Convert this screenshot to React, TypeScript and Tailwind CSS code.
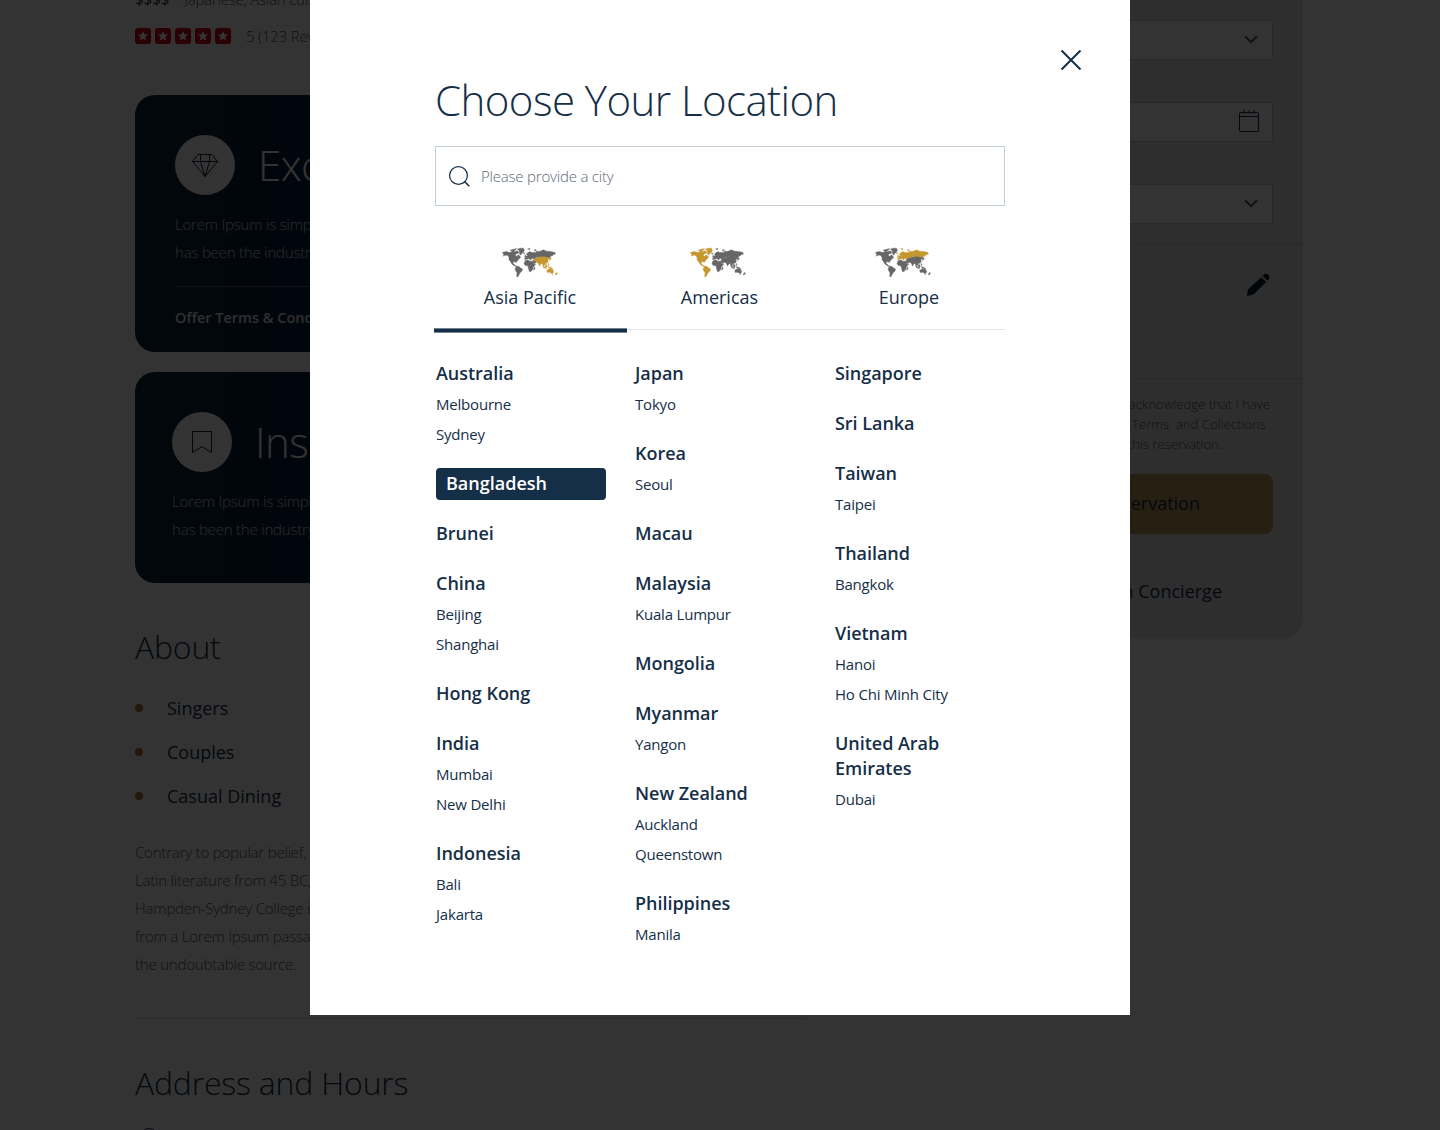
import React from "react";

type Country = { name: string; cities?: string[]; active?: boolean };

const columns: Country[][] = [
  [
    { name: "Australia", cities: ["Melbourne", "Sydney"] },
    { name: "Bangladesh", active: true },
    { name: "Brunei" },
    { name: "China", cities: ["Beijing", "Shanghai"] },
    { name: "Hong Kong" },
    { name: "India", cities: ["Mumbai", "New Delhi"] },
    { name: "Indonesia", cities: ["Bali", "Jakarta"] },
  ],
  [
    { name: "Japan", cities: ["Tokyo"] },
    { name: "Korea", cities: ["Seoul"] },
    { name: "Macau" },
    { name: "Malaysia", cities: ["Kuala Lumpur"] },
    { name: "Mongolia" },
    { name: "Myanmar", cities: ["Yangon"] },
    { name: "New Zealand", cities: ["Auckland", "Queenstown"] },
    { name: "Philippines", cities: ["Manila"] },
  ],
  [
    { name: "Singapore" },
    { name: "Sri Lanka" },
    { name: "Taiwan", cities: ["Taipei"] },
    { name: "Thailand", cities: ["Bangkok"] },
    { name: "Vietnam", cities: ["Hanoi", "Ho Chi Minh City"] },
    { name: "United Arab Emirates", cities: ["Dubai"] },
  ],
];

const GREY = "#666666";
const GOLD = "#c4982f";

function WorldMap({ region }: { region: "asia" | "americas" | "europe" }) {
  const am = region === "americas" ? GOLD : GREY;
  const eu = region === "europe" ? GOLD : GREY;
  const as = region === "asia" ? GOLD : GREY;
  return (
    <svg viewBox="36 36 168 92" className="h-[31px] w-[56px]" strokeWidth="1.200" strokeLinejoin="round">
      <g fill={am} stroke={am}>
        <path d="M37 52 L48 49 L60 52 L70 47 L74 50 L80 47 L86 50 L84 55 L78 56 L76 60 L81 64 L84 59 L89 62 L92 67 L87 71 L84 75 L80 79 L79 83 L76 80 L70 80 L69 85 L73 87 L74 90 L80 93 L77 94 L70 90 L64 84 L61 78 L57 74 L57 66 L52 60 L46 60 L39 63 L42 59Z" />
        <path d="M60 45 L68 43 L80 40 L76 45 L68 48Z" />
        <path d="M82 42 L90 39 L100 39 L103 44 L101 51 L95 55 L92 60 L88 55 L88 47Z" />
        <path d="M79 93 L86 93 L91 98 L98 102 L95 109 L90 113 L87 119 L84 125 L80 124 L81 113 L75 103Z" />
      </g>
      <g fill={GREY} stroke={GREY}>
        <path d="M105 77 L114 74 L119 78 L128 78 L132 87 L137 87 L130 96 L128 103 L122 110 L118 109 L115 98 L114 92 L106 91 L102 86Z" />
        <path d="M132 98 L135 96 L134 103 L131 105Z" />
        <path d="M128 76 L134 75 L140 79 L135 85 L131 84Z" />
      </g>
      <g fill={as} stroke={as}>
        <path d="M129 72 L137 68 L145 66 L152 64 L162 62 L174 65 L180 65 L178 71 L173 73 L175 80 L170 84 L165 85 L167 91 L162 88 L163 96 L158 89 L156 84 L151 88 L149 93 L145 84 L138 80 L134 76Z" />
        <path d="M181 67 L184 70 L179 76 L178 73Z M158 91 L165 98 L170 99 L168 101 L160 97Z M166 91 L171 88 L171 96 L167 97Z M174 94 L185 98 L188 102 L178 99Z M174 84 L177 88 L175 91Z" />
        <path d="M170 106 L175 102 L180 101 L183 103 L186 100 L191 109 L189 114 L184 115 L180 111 L172 112Z M199 112 L203 114 L197 120 L196 118Z M186 117 L188 117 L187 119Z" />
      </g>
      <g fill={eu} stroke={eu}>
        <path d="M104 73 L104 69 L108 68 L107 65 L112 62 L112 60 L109 58 L113 53 L120 49 L125 52 L131 52 L138 52 L141 46 L145 50 L154 47 L160 44 L170 48 L182 49 L195 52 L196 57 L190 58 L186 63 L182 61 L181 66 L174 66 L162 63 L150 65 L139 66 L134 70 L125 70 L122 75 L117 70 L109 72Z" />
        <path d="M105 60 L108 62 L107 67 L104 66Z M101 54 L105 54 L104 57 L101 56Z M113 41 L120 40 L118 44Z M132 46 L138 42 L136 48Z" />
      </g>
    </svg>
  );
}

function StarBox() {
  return (
    <svg viewBox="0 0 16 16" className="size-4">
      <rect width="16" height="16" rx="3" fill="#d3001b" />
      <path fill="#fff" d="M8 3l1.5 3.2 3.5.4-2.6 2.4.7 3.5L8 10.8l-3.1 1.7.7-3.5L3 6.6l3.5-.4z" />
    </svg>
  );
}

function SelectBox({ icon }: { icon: "chevron" | "calendar" }) {
  return (
    <div className="mb-[42px] flex h-10 items-center justify-end border border-[#c8ced6] bg-white pr-[13px]">
      {icon === "chevron" ? (
        <svg viewBox="0 0 14 9" className="mb-px mr-px h-[9px] w-[14px]" fill="none" stroke="#4b5560" strokeWidth="2">
          <path d="M1 1.2l6 6 6-6" />
        </svg>
      ) : (
        <svg viewBox="0 0 20 22" className="mb-[2px] h-[22px] w-5" fill="none" stroke="#0a2540">
          <rect x=".5" y="2.5" width="19" height="19" rx="1" />
          <path d="M0 6.5h20" />
          <path d="M5 0v4M10 0v4M15 0v4" stroke="#6b7480" strokeWidth="1.6" />
        </svg>
      )}
    </div>
  );
}

function Page() {
  return (
    <div className="flex h-full items-start justify-between bg-white pl-[135px] text-[#4c5666]">
      <div className="w-[670px] whitespace-nowrap">
        <div className="-mt-[13px] flex h-6 items-center gap-[15px] text-[15px] font-light tracking-[-0.2px]">
          <span className="font-normal tracking-normal text-[#162f48]">$$$$</span>
          <span>Japanese, Asian cuisine</span>
        </div>
        <div className="mt-[17px] flex h-4 items-center">
          <div className="flex gap-1">
            <StarBox /><StarBox /><StarBox /><StarBox /><StarBox />
          </div>
          <span className="ml-[15px] text-[15px] font-light tracking-[-0.2px]">5 (123 Reviews)</span>
        </div>

        <section className="mt-[51px] h-[257px] overflow-hidden rounded-[20px] bg-linear-to-r from-[#0a2633] to-[#041d46] to-30% pl-10 pt-10 text-white">
          <div className="flex h-[60px] items-center">
            <div className="flex size-[60px] items-center justify-center rounded-full bg-white">
              <svg viewBox="0 0 26 23" className="h-[23px] w-[26px]" fill="none" stroke="#0a2540" strokeWidth="1" strokeLinejoin="round">
                <path d="M6 .5h14l5.5 7L13 22.500.5 7.500zM.5 7.500h25M8.500.5v7L13 22.500l4.500-15v-7" />
              </svg>
            </div>
            <h2 className="mb-[2px] ml-[23px] text-[42px] font-light tracking-[-0.55px]">Exclusive</h2>
          </div>
          <p className="mt-[15px] text-[15px] font-light leading-7 tracking-[-0.2px] text-white/80">Lorem Ipsum is simply dummy text<br />has been the industry's standard</p>
          <div className="mr-10 mt-5 border-t border-white/30" />
          <div className="mt-[19px] text-[14.500px] font-semibold leading-6 text-white/90">Offer Terms &amp; Conditions</div>
        </section>

        <section className="mt-5 h-[211px] overflow-hidden rounded-[20px] bg-linear-to-r from-[#0a2633] to-[#041d46] to-30% pl-[37px] pt-10 text-white">
          <div className="flex h-[60px] items-center">
            <div className="flex size-[60px] items-center justify-center rounded-full bg-white">
              <svg viewBox="0 0 20 22" className="h-[22px] w-5" fill="none" stroke="#0a2540">
                <path d="M.5.5h19v21L10 15.500.5 21.500z" />
              </svg>
            </div>
            <h2 className="mb-[2px] ml-[23px] text-[42px] font-light tracking-[-0.55px]">Insider</h2>
          </div>
          <p className="mt-[15px] text-[15px] font-light leading-7 tracking-[-0.2px] text-white/80">Lorem Ipsum is simply dummy text<br />has been the industry's standard</p>
        </section>

        <h2 className="mt-[41px] text-[32px] font-light leading-[46px] tracking-[-0.2px] text-[#162f48]">About</h2>
        <ul className="mt-[16px] text-[18px] leading-[44px] text-[#162f48]">
          {["Singers", "Couples", "Casual Dining"].map((t) => (
            <li key={t} className="flex items-center gap-6">
              <span className="size-2 rounded-full bg-[#b5773c]" />
              {t}
            </li>
          ))}
        </ul>
        <p className="mt-5 text-[15px] font-light leading-7 tracking-[-0.2px]">
          Contrary to popular belief, Lorem Ipsum<br />
          Latin literature from 45 BC, making it over<br />
          Hampden-Sydney College in Virginia<br />
          from a Lorem Ipsum passage, and going<br />
          the undoubtable source.
        </p>
        <div className="mt-10 border-t border-[#c8ced6]" />
        <h2 className="mt-[41px] text-[32px] font-light leading-[46px] tracking-[-0.2px] text-[#162f48]">Address and Hours</h2>
        <div className="ml-1 mt-[22px] size-5 rounded-full border border-[#162f48]" />
      </div>

      <aside className="mr-[137px] h-[638px] w-[330px] overflow-hidden whitespace-nowrap rounded-br-[20px] bg-[#e3e6ec]">
        <div className="px-[30px] pt-5">
          <SelectBox icon="chevron" />
          <SelectBox icon="calendar" />
          <SelectBox icon="chevron" />
        </div>
        <div className="-mt-[22px] flex h-[135px] justify-end border-y border-[#c8ced6] pr-[33px] pt-7">
          <svg viewBox="0 0 24 24" className="size-6" fill="#061a2c">
            <path d="M15.300 4.200l4.800 4.800L7.500 21.600 1 23l1-6.500z M16.600 2.900l1-1a3.400 3.400 0 0 1 4.800 4.800l-1 1z" />
          </svg>
        </div>
        <p className="pr-[33px] pt-[15px] text-right text-[13px] font-light leading-5 tracking-[0.06px]">
          I acknowledge that i have<br />
          <span className="mr-1">the Terms&nbsp; and Collections</span><br />
          <span className="mr-[48px]">making this reservation.</span>
        </p>
        <div className="mx-[30px] mt-5 flex h-[60px] items-center justify-end rounded-lg bg-[#c39b5c] pb-[2px] pr-[73px] text-[18px] text-[#162f48]">Reservation</div>
        <div className="mt-[43px] pr-[81px] text-right text-[18px] leading-7 text-[#162f48]">with Concierge</div>
      </aside>
    </div>
  );
}

function Dialog() {
  return (
    <div className="h-[1015px] w-[820px] bg-white px-[125px] text-[#162f48]">
      <div className="-mr-[77px] flex justify-end pt-[49px]">
        <svg viewBox="0 0 22 22" className="size-[22px]" stroke="#162f48" strokeWidth="2">
          <path d="M1.500 1.500l19 19M20.500 1.500l-19 19" />
        </svg>
      </div>
      <h1 className="-mt-px h-[60px] text-[42px] font-light leading-[60px] tracking-[-0.55px]">Choose Your Location</h1>
      <label className="mt-4 flex h-[60px] items-center border border-[#c5cfd6] pl-[13px]">
        <svg viewBox="0 0 21 21" className="size-[21px]" fill="none" stroke="#162f48" strokeWidth="1.200">
          <circle cx="9.500" cy="9.500" r="8.900" />
          <path d="M15.500 15.500l4.800 4.800" strokeWidth="1.600" />
        </svg>
        <span className="ml-[11px] text-[15px] font-light tracking-[-0.2px] text-[#5d6975]">Please provide a city</span>
      </label>
      <div className="relative mt-[41px] flex h-[83px] border-b border-[#e4e7ea] text-[18px]">
        <div className="flex w-[190px] flex-col items-center">
          <WorldMap region="asia" />
          <span className="mt-[5px] leading-7">Asia Pacific</span>
        </div>
        <div className="flex w-[189px] flex-col items-center">
          <div className="-ml-[3px]"><WorldMap region="americas" /></div>
          <span className="mt-[5px] leading-7">Americas</span>
        </div>
        <div className="flex w-[190px] flex-col items-center">
          <div className="-ml-[13px]"><WorldMap region="europe" /></div>
          <span className="mt-[5px] leading-7">Europe</span>
        </div>
        <div className="absolute -bottom-[3.500px] -left-px h-[5px] w-[193px] border-y border-[#162f48]/60 bg-[#162f48] bg-clip-padding" />
      </div>
      <div className="ml-px mt-[31px] grid grid-cols-[199px_200px_170px]">
        {columns.map((col, i) => (
          <div key={i} className="flex w-[170px] flex-col gap-[25px]">
            {col.map((c) => (
              <div key={c.name}>
                <h3
                  className={
                    c.active
                      ? "-my-[3.500px] h-8 rounded-[4px] bg-[#162f48] pl-[10px] text-[18px] font-semibold leading-[31px] text-white"
                      : "text-[18px] font-semibold leading-[25px] tracking-[-0.03px]"
                  }
                >
                  {c.name}
                </h3>
                {c.cities?.map((t) => (
                  <div key={t} className="h-[30px] pt-[7px] text-[15px] leading-[23px] tracking-[-0.2px]">{t}</div>
                ))}
              </div>
            ))}
          </div>
        ))}
      </div>
    </div>
  );
}

export default function App() {
  return (
    <div className="relative h-[1130px] w-[1440px] overflow-hidden font-['Open_Sans',sans-serif]">
      <Page />
      <div className="absolute inset-0 flex items-start justify-center bg-black/80">
        <Dialog />
      </div>
    </div>
  );
}
